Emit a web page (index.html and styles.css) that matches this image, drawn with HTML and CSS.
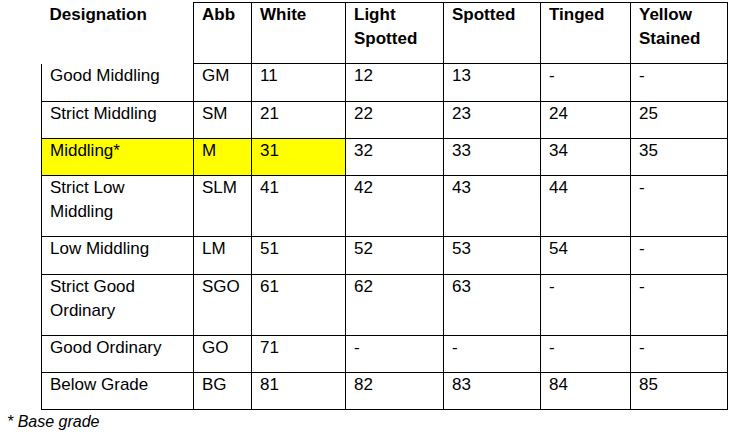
FILE: index.html
```html
<!DOCTYPE html>
<html lang="en">
<head>
<meta charset="utf-8">
<title>Cotton grades</title>
<link rel="stylesheet" href="styles.css">
</head>
<body>
<div class="page">
  <table class="grades">
    <colgroup>
      <col class="c-des"><col class="c-abb"><col class="c-white"><col class="c-ls"><col class="c-sp"><col class="c-ti"><col class="c-ys">
    </colgroup>
    <thead>
      <tr>
        <th class="corner">Designation</th>
        <th>Abb</th>
        <th>White</th>
        <th>Light Spotted</th>
        <th>Spotted</th>
        <th>Tinged</th>
        <th>Yellow Stained</th>
      </tr>
    </thead>
    <tbody>
      <tr><td>Good Middling</td><td>GM</td><td>11</td><td>12</td><td>13</td><td>-</td><td>-</td></tr>
      <tr><td>Strict Middling</td><td>SM</td><td>21</td><td>22</td><td>23</td><td>24</td><td>25</td></tr>
      <tr><td class="hl">Middling*</td><td class="hl">M</td><td class="hl">31</td><td>32</td><td>33</td><td>34</td><td>35</td></tr>
      <tr><td>Strict Low Middling</td><td>SLM</td><td>41</td><td>42</td><td>43</td><td>44</td><td>-</td></tr>
      <tr><td>Low Middling</td><td>LM</td><td>51</td><td>52</td><td>53</td><td>54</td><td>-</td></tr>
      <tr><td>Strict Good Ordinary</td><td>SGO</td><td>61</td><td>62</td><td>63</td><td>-</td><td>-</td></tr>
      <tr><td>Good Ordinary</td><td>GO</td><td>71</td><td>-</td><td>-</td><td>-</td><td>-</td></tr>
      <tr><td>Below Grade</td><td>BG</td><td>81</td><td>82</td><td>83</td><td>84</td><td>85</td></tr>
    </tbody>
  </table>
  <p class="note">* Base grade</p>
</div>
</body>
</html>
```
FILE: styles.css
```css
html, body {
  margin: 0;
  padding: 0;
  background: #ffffff;
}
body {
  font-family: "Liberation Sans", Arial, sans-serif;
  font-size: 17px;
  color: #000000;
}
.page {
  padding: 2px 0 0 41px;
}
.grades {
  border-collapse: collapse;
  table-layout: fixed;
  width: 686px;
}
.c-des { width: 152px; }
.c-abb { width: 58px; }
.c-white { width: 94px; }
.c-ls { width: 98px; }
.c-sp { width: 97px; }
.c-ti { width: 90px; }
.c-ys { width: 97px; }
.grades th,
.grades td {
  border: 1px solid #000000;
  padding: 0 6px 12.25px 8px;
  line-height: 24px;
  text-align: left;
  vertical-align: top;
  font-weight: normal;
}
.grades th {
  font-weight: bold;
}
.grades th.corner {
  border-top-style: hidden;
  border-left-style: hidden;
  border-bottom-style: hidden;
}
.grades td.hl {
  background: #ffff00;
}
.note {
  margin: 2px 0 0 -34px;
  font-size: 16px;
  font-style: italic;
  line-height: 20px;
}
```
